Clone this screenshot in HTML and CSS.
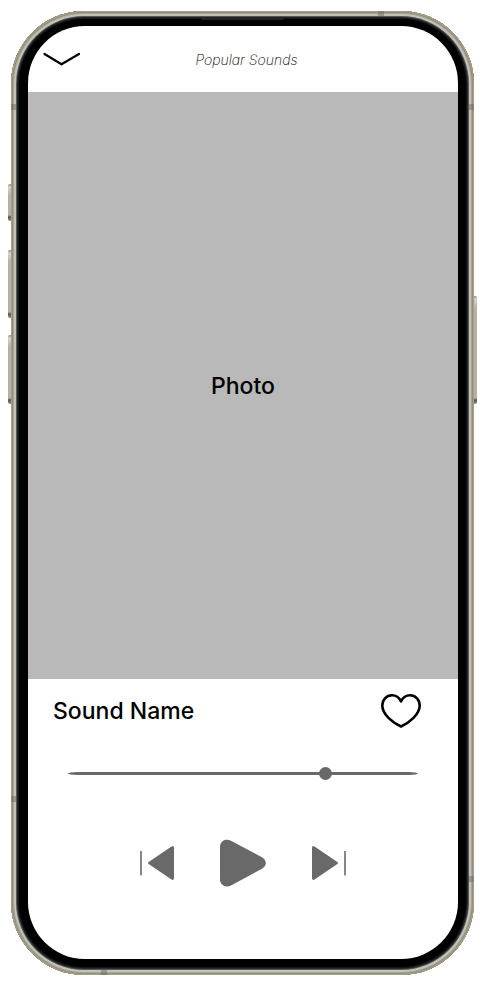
FILE: index.html
```html
<!DOCTYPE html>
<html lang="en">
<head>
  <meta charset="utf-8">
  <meta name="viewport" content="width=device-width, initial-scale=1">
  <title>Popular Sounds</title>
  <link rel="stylesheet" href="styles.css">
</head>
<body>
  <div class="phone">
    <span class="key key-action"></span>
    <span class="key key-up"></span>
    <span class="key key-down"></span>
    <span class="key key-power"></span>
    <span class="band band-left-top"></span>
    <span class="band band-left-bottom"></span>
    <span class="band band-right-top"></span>
    <span class="band band-right-bottom"></span>
    <span class="band band-top"></span>
    <span class="band band-bottom"></span>
    <span class="earpiece"></span>

    <main class="screen">
      <header class="header">
        <button class="icon-button" type="button" aria-label="Close player">
          <svg width="38" height="16" viewBox="0 0 38 16" fill="none" stroke="#000" stroke-width="2.200" stroke-linecap="round" stroke-linejoin="round">
            <path d="M1.500 2L18.500 12.300L36 2"/>
          </svg>
        </button>
        <p class="playlist">Popular Sounds</p>
      </header>

      <div class="photo">Photo</div>

      <section class="player">
        <div class="title-row">
          <h1 class="title">Sound Name</h1>
          <button class="icon-button" type="button" aria-label="Add to favourites">
            <svg width="42" height="36" viewBox="0 0 42 36" fill="none" stroke="#000" stroke-width="2.600" stroke-linejoin="round">
              <path d="M21 8.500C19.200 4.700 16 2.300 12 2.300C6.200 2.300 2.300 6.800 2.300 12.600C2.300 21.500 12.500 29.600 21 33.500C29.500 29.600 39.700 21.500 39.700 12.600C39.700 6.800 35.800 2.300 30 2.300C26 2.300 22.800 4.700 21 8.500Z"/>
            </svg>
          </button>
        </div>

        <input class="seek" type="range" min="0" max="1000" value="746" aria-label="Playback position">

        <div class="controls">
          <button class="icon-button" type="button" aria-label="Previous">
            <svg width="36" height="36" viewBox="0 0 36 36" fill="#696969">
              <path opacity=".8" d="M0 6H2V30.500H0Z"/>
              <path d="M9 16.700L31.500 1.400Q34 0.400 34 3V33Q34 35.600 31.500 34.600L9 19.300Q7 18 9 16.700Z"/>
            </svg>
          </button>
          <button class="icon-button" type="button" aria-label="Play">
            <svg width="48" height="48" viewBox="0 0 48 48" fill="#696969">
              <path d="M1 8C1 1.500 7 -1 12 1.800L42.500 18C48.300 21.300 48.300 26.700 42.500 30L12 46.500C7 49 1 46.500 1 40Z"/>
            </svg>
          </button>
          <button class="icon-button" type="button" aria-label="Next">
            <svg width="36" height="36" viewBox="0 0 36 36" fill="#696969">
              <path opacity=".8" d="M34 6H36V30.500H34Z"/>
              <path d="M27 16.700L4.500 1.400Q2 0.400 2 3V33Q2 35.600 4.500 34.600L27 19.300Q29 18 27 16.700Z"/>
            </svg>
          </button>
        </div>
      </section>
    </main>
  </div>
</body>
</html>
```
FILE: styles.css
```css
* {
  box-sizing: border-box;
}

body {
  margin: 0;
  min-height: 100vh;
  padding: 11px 8px 12px 11px;
  display: flex;
  background: #fff;
  color: #000;
  font-family: Inter, "Liberation Sans", sans-serif;
}

/* Handset: metal rim drawn as stacked inner rings over the black bezel */
.phone {
  position: relative;
  flex: 1;
  display: flex;
  padding: 15px 16px 16px 17px;
  border-radius: 73px;
  background: #000;
  box-shadow:
    inset 0 0 0 1px #a5a08e,
    inset 0 0 0 2px #938d7a,
    inset 0 0 0 3px #aaa591,
    inset 0 0 0 5px #c2c2b7,
    inset 0 0 0 6px #50575a,
    inset 0 0 0 7px #24282a,
    inset 0 0 0 8px #151617;
}

.screen {
  flex: 1;
  min-width: 0;
  display: flex;
  flex-direction: column;
  overflow: hidden;
  border-radius: 57px;
  background: #fff;
}

.key {
  position: absolute;
  left: -3px;
  width: 3px;
  border-radius: 2px 0 0 2px;
  background: linear-gradient(#8e8b80 0, #d5d4ca 3px, #b5b2a3 12px, #b5b2a3 calc(100% - 6px), #55534b calc(100% - 4px), #96938a 100%);
}

.key-action { top: 173px; height: 37px; }
.key-up { top: 239px; height: 68px; }
.key-down { top: 324px; height: 69px; }

.key-power {
  top: 285px;
  left: auto;
  right: -3px;
  height: 108px;
  border-radius: 0 2px 2px 0;
}

.band {
  position: absolute;
  width: 5px;
  height: 6px;
  background: #6b6a6180;
}

.band-left-top { top: 93px; left: 0; }
.band-left-bottom { bottom: 173px; left: 0; }
.band-right-top { top: 93px; right: 0; }
.band-right-bottom { bottom: 93px; right: 0; }
.band-top { top: 0; right: 90px; width: 6px; height: 5px; }
.band-bottom { bottom: 0; left: 90px; width: 6px; height: 5px; }

.earpiece {
  position: absolute;
  top: 6px;
  left: 50%;
  width: 86px;
  height: 3px;
  transform: translateX(-50%);
  clip-path: polygon(0 0, 100% 0, 97% 100%, 3% 100%);
  background: #222527;
}

.header {
  display: grid;
  grid-template-columns: 1fr auto 1fr;
  align-items: center;
  height: 66px;
  padding: 2px 8px 0 15px;
}

.icon-button {
  display: flex;
  justify-self: start;
  padding: 0;
  border: 0;
  background: none;
  cursor: pointer;
}

.playlist {
  margin: 0;
  font-size: 14px;
  font-style: italic;
  font-weight: 200;
  line-height: 20px;
}

.photo {
  flex: 1;
  display: flex;
  align-items: center;
  justify-content: center;
  background: #b9b9b9;
  font-size: 23px;
  font-weight: 500;
}

.player {
  height: 280px;
  padding-top: 14px;
}

.title-row {
  display: flex;
  align-items: center;
  justify-content: space-between;
  padding: 0 36px 0 25px;
}

.title {
  margin: 0;
  font-size: 23px;
  font-weight: 500;
  line-height: 36px;
}

.seek {
  display: block;
  width: calc(100% - 80px);
  height: 14px;
  margin: 37px 40px 0;
  background: none;
  appearance: none;
}

.seek::-webkit-slider-runnable-track {
  height: 3px;
  border-radius: 12px / 2px;
  background: #696969;
}

.seek::-webkit-slider-thumb {
  width: 13px;
  height: 13px;
  margin-top: -5px;
  border-radius: 50%;
  background: #696969;
  appearance: none;
}

.controls {
  display: flex;
  align-items: center;
  justify-content: center;
  gap: 43px;
  margin-top: 59px;
}
```
